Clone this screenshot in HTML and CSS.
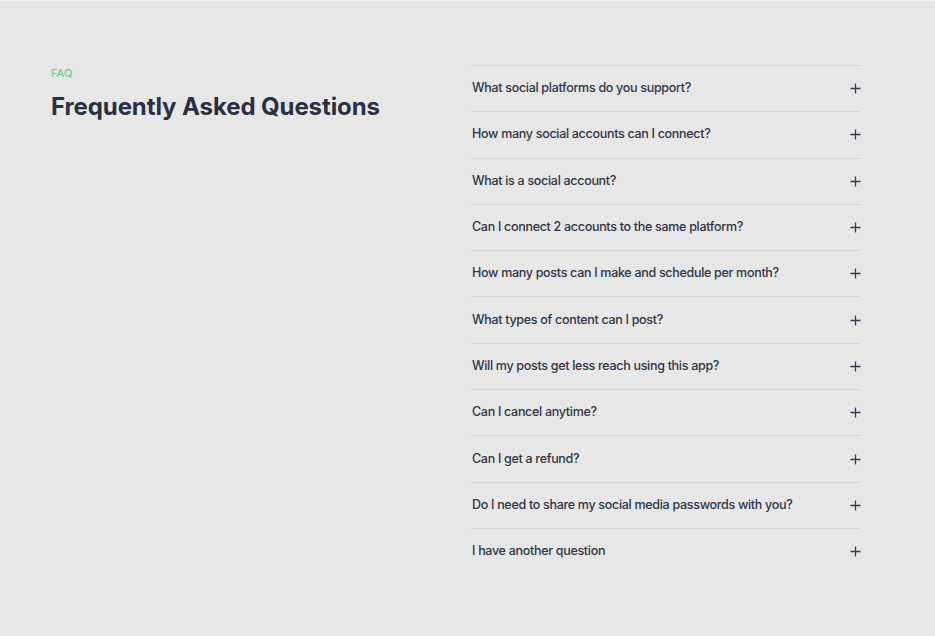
FILE: index.html
```html
<!DOCTYPE html>
<html lang="en">
<head>
<meta charset="utf-8">
<title>FAQ</title>
<link rel="stylesheet" href="styles.css">
</head>
<body>
<section class="faq">
  <div class="faq-intro">
    <p class="eyebrow">FAQ</p>
    <h2 class="title">Frequently Asked Questions</h2>
  </div>
  <ul class="faq-list">
    <li class="faq-item"><span class="q">What social platforms do you support?</span><svg class="plus" viewBox="0 0 12 12"><path d="M6 0.5V11.5M0.5 6H11.5"/></svg></li>
    <li class="faq-item"><span class="q">How many social accounts can I connect?</span><svg class="plus" viewBox="0 0 12 12"><path d="M6 0.5V11.5M0.5 6H11.5"/></svg></li>
    <li class="faq-item"><span class="q">What is a social account?</span><svg class="plus" viewBox="0 0 12 12"><path d="M6 0.5V11.5M0.5 6H11.5"/></svg></li>
    <li class="faq-item"><span class="q">Can I connect 2 accounts to the same platform?</span><svg class="plus" viewBox="0 0 12 12"><path d="M6 0.5V11.5M0.5 6H11.5"/></svg></li>
    <li class="faq-item"><span class="q">How many posts can I make and schedule per month?</span><svg class="plus" viewBox="0 0 12 12"><path d="M6 0.5V11.5M0.5 6H11.5"/></svg></li>
    <li class="faq-item"><span class="q">What types of content can I post?</span><svg class="plus" viewBox="0 0 12 12"><path d="M6 0.5V11.5M0.5 6H11.5"/></svg></li>
    <li class="faq-item"><span class="q">Will my posts get less reach using this app?</span><svg class="plus" viewBox="0 0 12 12"><path d="M6 0.5V11.5M0.5 6H11.5"/></svg></li>
    <li class="faq-item"><span class="q">Can I cancel anytime?</span><svg class="plus" viewBox="0 0 12 12"><path d="M6 0.5V11.5M0.5 6H11.5"/></svg></li>
    <li class="faq-item"><span class="q">Can I get a refund?</span><svg class="plus" viewBox="0 0 12 12"><path d="M6 0.5V11.5M0.5 6H11.5"/></svg></li>
    <li class="faq-item"><span class="q">Do I need to share my social media passwords with you?</span><svg class="plus" viewBox="0 0 12 12"><path d="M6 0.5V11.5M0.5 6H11.5"/></svg></li>
    <li class="faq-item"><span class="q">I have another question</span><svg class="plus" viewBox="0 0 12 12"><path d="M6 0.5V11.5M0.5 6H11.5"/></svg></li>
  </ul>
</section>
</body>
</html>
```

FILE: styles.css
```css
html, body {
  margin: 0;
  padding: 0;
}
body {
  background: #e7e7e7;
  border-top: 1px solid #f1f1f1;
  font-family: Inter, "Noto Sans", sans-serif;
  color: #2c3244;
  min-height: 635px;
}
.faq {
  display: flex;
  padding: 64px 0 0 51px;
}
.faq-intro {
  width: 420px;
}
.eyebrow {
  margin: 1px 0 0;
  font-size: 11px;
  line-height: 14px;
  font-weight: 500;
  color: #6cd08f;
}
.title {
  margin: 12px 0 0;
  font-size: 24px;
  line-height: 30px;
  font-weight: 650;
  letter-spacing: -0.1px;
  color: #2a3042;
}
.faq-list {
  list-style: none;
  margin: 0;
  padding: 0;
  width: 390px;
}
.faq-item {
  display: flex;
  align-items: center;
  justify-content: space-between;
  height: 45.3px;
  border-top: 1px solid #d5d5d7;
  padding-left: 1px;
}
.q {
  font-size: 12.5px;
  line-height: 16px;
  margin-top: -1px;
  font-weight: 500;
  color: #2f3446;
  letter-spacing: -0.3px;
}
.plus {
  width: 11px;
  height: 11px;
  stroke: #353b4e;
  stroke-width: 1.4;
  fill: none;
}
```
